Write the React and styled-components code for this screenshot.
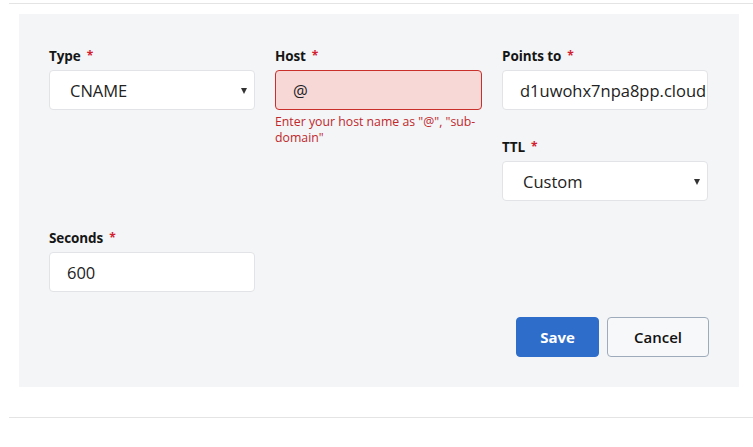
import React from 'react';
import styled, { createGlobalStyle } from 'styled-components';

const GlobalStyle = createGlobalStyle`
  body {
    margin: 0;
    background: #fff;
    font-family: "Open Sans", "Liberation Sans", sans-serif;
    color: #1b1b1b;
  }
`;

const Page = styled.div`
  padding: 3px 0 0 9px;
`;

const Section = styled.div`
  border-top: 1px solid #e4e4e4;
  border-bottom: 1px solid #e4e4e4;
  padding: 10px 0 30px 10px;
`;

const Panel = styled.form`
  width: 720px;
  box-sizing: border-box;
  background: #f4f5f7;
  padding: 34px 30px 30px 30px;
`;

const FieldGrid = styled.div`
  display: grid;
  grid-template-columns: 206px 207px 206px;
  column-gap: 20px;
  row-gap: 29px;
`;

const Field = styled.div`
  display: flex;
  flex-direction: column;
  grid-column: ${p => p.$col};
  grid-row: ${p => p.$row};
`;

const Label = styled.label`
  font-size: 13.5px;
  font-weight: 700;
  line-height: 16px;
  color: #151515;
  margin-bottom: 6px;
  letter-spacing: -0.1px;
`;

const Required = styled.span`
  color: #d3202f;
  margin-left: 6px;
  font-weight: 700;
  font-size: 12px;
  vertical-align: 1px;
`;

const Box = styled.div`
  position: relative;
  height: 40px;
  box-sizing: border-box;
  border: 1px solid ${p => (p.$error ? '#c9302c' : '#e1e3e6')};
  background: ${p => (p.$error ? '#f7d8d7' : '#fff')};
  border-radius: 4px;
  display: flex;
  align-items: center;
  padding-left: ${p => (p.$select ? '20px' : '17px')};
  font-size: 16.5px;
  color: #222;
  overflow: hidden;
  white-space: nowrap;
`;

const Caret = styled.span`
  position: absolute;
  right: 7px;
  top: 17px;
  width: 0;
  height: 0;
  border-left: 3.5px solid transparent;
  border-right: 3.5px solid transparent;
  border-top: 6px solid #333;
`;

const ErrorText = styled.div`
  margin-top: 4px;
  font-size: 12.3px;
  line-height: 16px;
  color: #c0282b;
`;

const Actions = styled.div`
  display: flex;
  justify-content: flex-end;
  gap: 8px;
  margin-top: 25px;
  width: 660px;
`;

const Button = styled.button`
  height: 40px;
  box-sizing: border-box;
  border-radius: 4px;
  font-family: "Open Sans", "Liberation Sans", sans-serif;
  font-size: 15px;
  font-weight: ${p => (p.$primary ? 700 : 600)};
  padding: 0;
  width: ${p => (p.$primary ? '83px' : '102px')};
  border: 1px solid ${p => (p.$primary ? '#2f6dcb' : '#9eabba')};
  background: ${p => (p.$primary ? '#2f6dcb' : '#f7f8fa')};
  color: ${p => (p.$primary ? '#fff' : '#111')};
  cursor: pointer;
`;

const fields = [
  { label: 'Type', value: 'CNAME', select: true, col: 1, row: 1 },
  { label: 'Host', value: '@', error: 'Enter your host name as "@", "sub-domain"', col: 2, row: '1 / span 2' },
  { label: 'Points to', value: 'd1uwohx7npa8pp.cloud', col: 3, row: 1 },
  { label: 'TTL', value: 'Custom', select: true, col: 3, row: 2 },
  { label: 'Seconds', value: '600', col: 1, row: 3 },
];

export default function App() {
  return (
    <>
      <GlobalStyle />
      <Page>
        <Section>
          <Panel onSubmit={e => e.preventDefault()}>
            <FieldGrid>
              {fields.map(f => (
                <Field key={f.label} $col={f.col} $row={f.row}>
                  <Label>
                    {f.label}
                    <Required>*</Required>
                  </Label>
                  <Box $select={f.select} $error={!!f.error}>
                    {f.value}
                    {f.select && <Caret />}
                  </Box>
                  {f.error && <ErrorText>{f.error}</ErrorText>}
                </Field>
              ))}
            </FieldGrid>
            <Actions>
              <Button $primary type="submit">Save</Button>
              <Button type="button">Cancel</Button>
            </Actions>
          </Panel>
        </Section>
      </Page>
    </>
  );
}
